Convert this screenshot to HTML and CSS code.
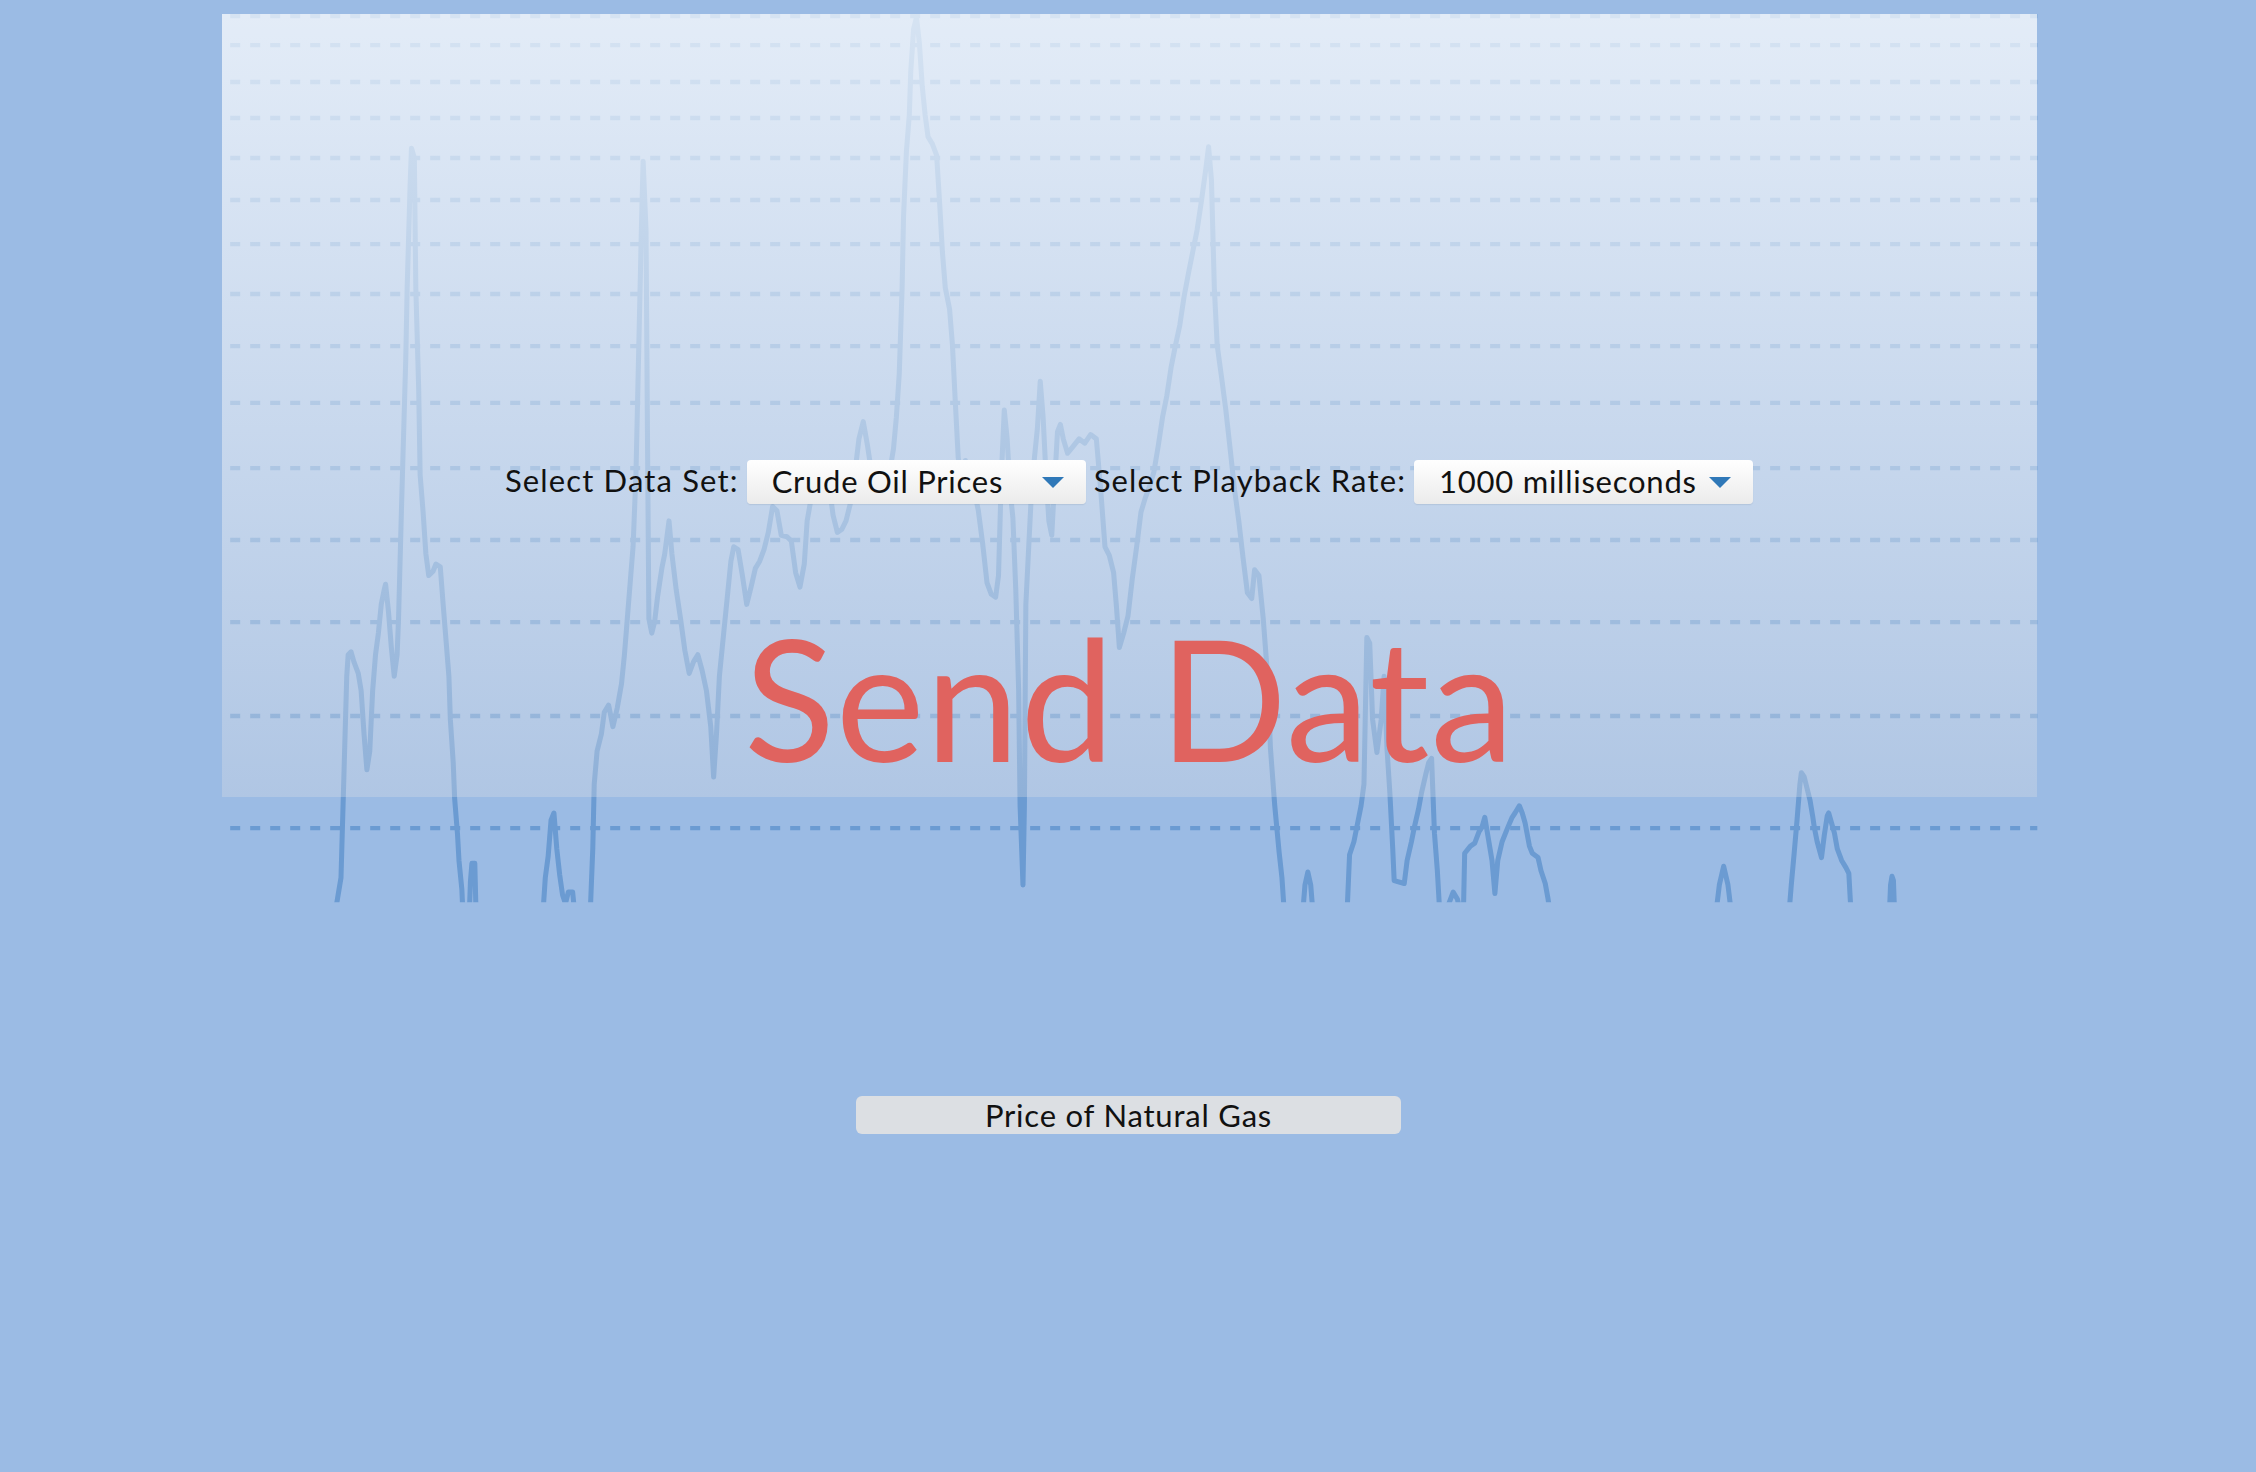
FILE: index.html
```html
<!DOCTYPE html>
<html lang="en">
<head>
<meta charset="utf-8">
<title>Send Data</title>
<link rel="stylesheet" href="styles.css">
</head>
<body>
<div class="stage">
  <svg class="chart" viewBox="0 0 1568 1023" preserveAspectRatio="none" aria-hidden="true">
    <defs>
      <clipPath id="plot"><rect x="0" y="0" width="1568" height="627"/></clipPath>
    </defs>
    <g class="grid">
      <line x1="160" x2="1416" y1="11.2" y2="11.2"/>
      <line x1="160" x2="1416" y1="31.3" y2="31.3"/>
      <line x1="160" x2="1416" y1="57" y2="57"/>
      <line x1="160" x2="1416" y1="82" y2="82"/>
      <line x1="160" x2="1416" y1="109.8" y2="109.8"/>
      <line x1="160" x2="1416" y1="139" y2="139"/>
      <line x1="160" x2="1416" y1="169.6" y2="169.6"/>
      <line x1="160" x2="1416" y1="204.3" y2="204.3"/>
      <line x1="160" x2="1416" y1="240.5" y2="240.5"/>
      <line x1="160" x2="1416" y1="280" y2="280"/>
      <line x1="160" x2="1416" y1="325.3" y2="325.3"/>
      <line x1="160" x2="1416" y1="375.3" y2="375.3"/>
      <line x1="160" x2="1416" y1="432.3" y2="432.3"/>
      <line x1="160" x2="1416" y1="497.6" y2="497.6"/>
      <line x1="160" x2="1416" y1="575.5" y2="575.5"/>
    </g>
    <g class="series" clip-path="url(#plot)">
      <path d="M232,640 L235,622 L237,610 L239,540 L241,470 L242,455 L244,453 L246,460 L249,468 L251,480 L253,510 L255,535 L257,522 L259,480 L261,455 L263,440 L265,420 L267,410 L268,406 L270,425 L272,450 L274,470 L276,455 L277,430 L279,355 L280,320 L282,250 L283,200 L285,130 L286,103 L288,110 L289,200 L291,270 L292,330 L294,355 L296,385 L298,400 L301,397 L303,392 L306,394 L308,420 L310,445 L312,470 L313,500 L315,530 L316,555 L318,580 L319,598 L321,618 L322,640 L326,640 L327,612 L328,600 L330,600 L331,640"/>
      <path d="M377,640 L379,610 L381,595 L383,570 L385,565 L387,590 L389,608 L391,622 L393,628 L395,620 L398,620 L400,640"/>
      <path d="M410,640 L412,590 L413,545 L415,522 L418,510 L420,495 L423,490 L426,505 L429,492 L432,475 L434,455 L436,430 L438,405 L440,380 L442,330 L444,240 L446,150 L447,112 L449,160 L450,300 L451,430 L453,440 L455,432 L457,415 L460,395 L462,385 L465,362 L467,385 L470,410 L473,430 L476,452 L479,468 L482,460 L485,455 L488,466 L491,480 L494,505 L496,540 L498,510 L500,470 L503,440 L506,410 L508,390 L510,380 L513,382 L516,400 L519,420 L522,408 L525,395 L528,390 L531,382 L534,370 L537,352 L540,355 L543,372 L547,373 L550,376 L553,398 L556,408 L559,392 L561,362 L564,345 L567,332 L570,326 L573,325 L576,335 L579,358 L582,370 L585,368 L588,362 L591,350 L594,330 L597,305 L600,293 L603,310 L606,330 L609,345 L612,338 L615,340 L618,330 L621,312 L623,290 L625,260 L627,200 L628,150 L630,105 L632,80 L633,50 L635,20 L637,12 L639,30 L641,60 L643,80 L645,95 L648,100 L651,108 L653,140 L655,175 L657,200 L660,215 L662,240 L664,280 L666,318 L668,332 L671,320 L674,330 L677,340 L680,355 L683,378 L686,405 L689,413 L692,415 L694,400 L696,330 L698,285 L700,305 L702,340 L704,360 L706,410 L708,480 L709,560 L711,615 L712,560 L713,420 L715,380 L717,340 L719,318 L721,298 L723,265 L725,290 L727,330 L729,362 L731,372 L733,335 L735,300 L737,295 L739,305 L742,315 L746,310 L750,305 L754,308 L758,302 L762,305 L765,340 L768,380 L771,386 L774,398 L776,422 L778,450 L781,440 L784,428 L787,402 L790,380 L793,356 L796,346 L799,338 L802,328 L805,310 L808,290 L811,275 L814,255 L817,240 L820,226 L823,206 L826,190 L829,175 L832,160 L835,140 L838,118 L840,102 L842,125 L844,200 L846,240 L849,262 L852,285 L855,312 L858,340 L861,362 L864,388 L867,412 L870,416 L872,396 L875,400 L878,430 L881,470 L883,520 L886,560 L889,592 L891,610 L893,640"/>
      <path d="M905,640 L907,615 L909,606 L911,615 L913,640"/>
      <path d="M936,640 L938,594 L941,585 L943,575 L946,560 L948,545 L950,443 L952,447 L954,500 L957,523 L960,500 L962,470 L964,520 L966,551 L968,590 L969,612 L976,614 L978,598 L981,585 L983,575 L986,562 L988,551 L991,538 L993,530 L995,527 L997,579 L999,605 L1001,640"/>
      <path d="M1005,640 L1007,628 L1010,620 L1013,625 L1016,640"/>
      <path d="M1017,640 L1018,593 L1022,588 L1025,586 L1028,578 L1030,575 L1032,568 L1034,580 L1037,598 L1039,621 L1041,598 L1044,585 L1048,575 L1051,568 L1053,565 L1056,560 L1058,565 L1060,572 L1063,588 L1065,593 L1069,596 L1071,605 L1074,614 L1076,625 L1078,640"/>
      <path d="M1192,640 L1195,615 L1198,602 L1201,615 L1204,640"/>
      <path d="M1243,640 L1245,615 L1247,593 L1249,570 L1251,545 L1252,537 L1254,540 L1256,548 L1258,556 L1260,568 L1261,575 L1263,585 L1266,596 L1268,580 L1270,567 L1271,565 L1273,572 L1275,579 L1277,590 L1280,598 L1283,603 L1285,607 L1286,625 L1287,640"/>
      <path d="M1313,640 L1314,615 L1315,609 L1316,612 L1317,640"/>
    </g>
  </svg>

  <main class="content">
    <section class="panel">
      <div class="controls">
        <span class="label">Select Data Set:</span>
        <div class="select">
          <span class="select-text">Crude Oil Prices</span>
          <svg class="caret" viewBox="0 0 22 11" aria-hidden="true"><polygon points="0,0 22,0 11,11"/></svg>
        </div>
        <span class="label">Select Playback Rate:</span>
        <div class="select">
          <span class="select-text">1000 milliseconds</span>
          <svg class="caret" viewBox="0 0 22 11" aria-hidden="true"><polygon points="0,0 22,0 11,11"/></svg>
        </div>
      </div>
      <h1 class="title">Send Data</h1>
    </section>
    <button class="dataset-btn" type="button">Price of Natural Gas</button>
  </main>
</div>
</body>
</html>
```

FILE: styles.css
```css
html, body {
  margin: 0;
  padding: 0;
}

body {
  background: #9bbbe4;
  font-family: "Lato", "Open Sans", "Liberation Sans", sans-serif;
  color: #111;
  width: 2256px;
  height: 1472px;
  overflow: hidden;
}

.stage {
  display: grid;
  width: 2256px;
  height: 1472px;
}

.chart {
  grid-area: 1 / 1;
  width: 2256px;
  height: 1472px;
  display: block;
}

.grid line {
  stroke: #6b9bd2;
  stroke-width: 3;
  stroke-dasharray: 6.95 6.95;
}

.series path {
  fill: none;
  stroke: #6b9bd2;
  stroke-width: 3.5;
  stroke-linejoin: round;
  stroke-linecap: butt;
}

.content {
  grid-area: 1 / 1;
  display: flex;
  flex-direction: column;
  align-items: flex-start;
  padding-top: 14px;
}

.panel {
  margin-left: 222px;
  width: 1815px;
  height: 783px;
  box-sizing: border-box;
  padding-top: 446px;
  background: linear-gradient(to bottom, rgba(255, 255, 255, 0.72), rgba(220, 222, 228, 0.32));
  display: flex;
  flex-direction: column;
  align-items: center;
}

.controls {
  display: flex;
  align-items: center;
  gap: 8px;
  height: 44px;
  margin-left: -1px;
}

.label {
  font-size: 31px;
  letter-spacing: 1.15px;
  line-height: 44px;
  color: #111;
  margin-top: -5px;
}

.select {
  width: 339px;
  height: 44px;
  box-sizing: border-box;
  padding: 0 22px 0 25px;
  display: flex;
  align-items: center;
  justify-content: space-between;
  background: linear-gradient(to bottom, #ffffff, #ebebeb);
  border-radius: 4px;
  box-shadow: 0 1px 1px rgba(60, 80, 110, 0.12);
}

.select-text {
  font-size: 31px;
  letter-spacing: 0.75px;
  color: #111;
  line-height: 44px;
  margin-top: -3px;
}

.caret {
  width: 22px;
  height: 11px;
  display: block;
}

.caret polygon {
  fill: #2f78b8;
}

.title {
  margin: 109px 0 0 0;
  font-size: 168px;
  font-weight: 400;
  line-height: 1;
  color: #e0635f;
  letter-spacing: 1px;
}

.dataset-btn {
  margin: 299px 0 0 856px;
  width: 545px;
  height: 38px;
  border: none;
  border-radius: 6px;
  background: #dcdfe3;
  font-family: "Lato", "Open Sans", "Liberation Sans", sans-serif;
  font-size: 31px;
  letter-spacing: 0.8px;
  color: #111;
  padding: 0;
  line-height: 38px;
}
```
